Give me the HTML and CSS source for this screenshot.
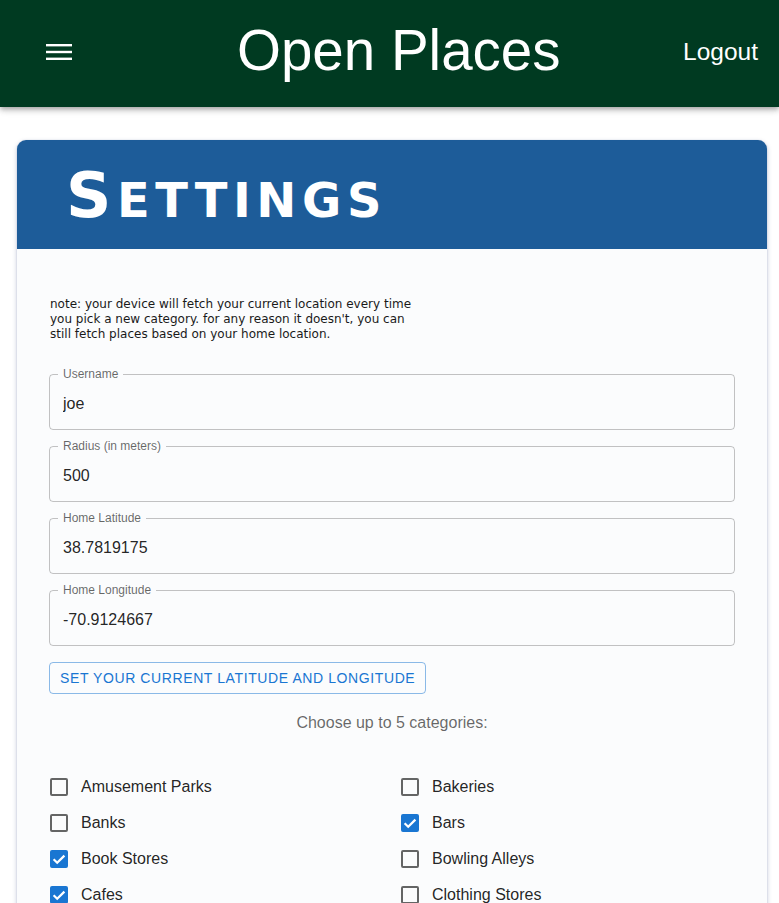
FILE: index.html
```html
<!DOCTYPE html>
<html lang="en">
<head>
<meta charset="utf-8">
<title>Open Places</title>
<link rel="stylesheet" href="styles.css">
</head>
<body>
<header class="appbar">
  <button class="menu-btn" aria-label="menu">
    <svg class="menu-icon" viewBox="0 0 26 16" width="26" height="16"><rect x="0" y="0" width="26" height="2.4"/><rect x="0" y="6.8" width="26" height="2.4"/><rect x="0" y="13.6" width="26" height="2.4"/></svg>
  </button>
  <h1 class="title">Open Places</h1>
  <button class="logout">Logout</button>
</header>

<main class="card">
  <div class="card-head"><h2 class="card-title">S<span class="caps">ettings</span></h2></div>
  <div class="card-body">
    <p class="note">note: your device will fetch your current location every time<br>you pick a new category. for any reason it doesn't, you can<br>still fetch places based on your home location.</p>

    <form class="fields">
      <fieldset class="field"><legend>Username</legend><input class="field-input" value="joe"></fieldset>
      <fieldset class="field"><legend>Radius (in meters)</legend><input class="field-input" value="500"></fieldset>
      <fieldset class="field"><legend>Home Latitude</legend><input class="field-input" value="38.7819175"></fieldset>
      <fieldset class="field"><legend>Home Longitude</legend><input class="field-input" value="-70.9124667"></fieldset>
    </form>

    <button class="outline-btn">Set your current latitude and longitude</button>

    <p class="choose">Choose up to 5 categories:</p>

    <div class="cats">
      <label class="cat"><span class="box"></span>Amusement Parks</label>
      <label class="cat"><span class="box"></span>Bakeries</label>
      <label class="cat"><span class="box"></span>Banks</label>
      <label class="cat"><span class="box checked"><svg viewBox="0 0 18 18" width="18" height="18"><path d="M3.6 9.2l3.6 3.6 7.2-7.2" /></svg></span>Bars</label>
      <label class="cat"><span class="box checked"><svg viewBox="0 0 18 18" width="18" height="18"><path d="M3.6 9.2l3.6 3.6 7.2-7.2" /></svg></span>Book Stores</label>
      <label class="cat"><span class="box"></span>Bowling Alleys</label>
      <label class="cat"><span class="box checked"><svg viewBox="0 0 18 18" width="18" height="18"><path d="M3.6 9.2l3.6 3.6 7.2-7.2" /></svg></span>Cafes</label>
      <label class="cat"><span class="box"></span>Clothing Stores</label>
      <label class="cat"><span class="box"></span>Convenience Stores</label>
      <label class="cat"><span class="box"></span>Gyms</label>
    </div>
  </div>
</main>
</body>
</html>
```

FILE: styles.css
```css
* { box-sizing: border-box; }
html, body { margin: 0; padding: 0; }
body {
  background: #ffffff;
  font-family: "Liberation Sans", Arial, sans-serif;
  color: rgba(0,0,0,0.87);
  overflow: hidden;
}

.appbar {
  height: 107px;
  background: #003a21;
  display: flex;
  align-items: center;
  padding: 0 21px 0 46px;
  box-shadow: 0 2px 4px -1px rgba(0,0,0,0.2), 0 4px 5px 0 rgba(0,0,0,0.14), 0 1px 10px 0 rgba(0,0,0,0.12);
  color: #fff;
}
.menu-btn {
  background: none;
  border: 0;
  padding: 0;
  display: flex;
  cursor: pointer;
  margin-top: -4px;
}
.menu-icon { fill: #fff; display: block; }
.title {
  flex: 1;
  margin: 0 0 0 100px;
  font-size: 56.5px;
  font-weight: 400;
  line-height: 1;
  text-align: left;
  padding-left: 65px;
  padding-bottom: 4px;
}
.logout {
  background: none;
  border: 0;
  color: #fff;
  font-family: "Liberation Sans", Arial, sans-serif;
  font-size: 24.5px;
  padding: 0;
  margin-bottom: 3px;
}

.card {
  margin: 33px 12px 0 17px;
  border-radius: 9px 9px 0 0;
  background: #fbfcfd;
  box-shadow: 0 2px 5px rgba(30,50,110,0.28), 0 0 1px rgba(30,50,110,0.3);
  overflow: hidden;
}
.card-head {
  background: #1d5c99;
  height: 109px;
  padding: 21px 0 0 49px;
}
.card-title {
  margin: 0;
  color: #fff;
  font-family: "DejaVu Sans", Verdana, sans-serif;
  font-weight: 700;
  font-size: 63px;
  line-height: 1.1;
  letter-spacing: 5.6px;
}
.caps {
  text-transform: uppercase;
  font-size: 0.76em;
}
.card-body {
  padding: 48px 32px 40px 32px;
}
.note {
  margin: 0 0 26px 1px;
  font-family: "DejaVu Sans", Verdana, sans-serif;
  font-size: 12px;
  line-height: 15px;
  color: #1a1a1a;
}

.fields {
  display: flex;
  flex-direction: column;
  gap: 10px;
  margin: 0;
}
.field {
  margin: 0;
  padding: 0 8px;
  border: 1px solid rgba(0,0,0,0.23);
  border-radius: 4px;
  min-width: 0;
}
.field legend {
  padding: 0 5px;
  font-size: 12px;
  line-height: 12px;
  color: rgba(0,0,0,0.6);
}
.field-input {
  display: block;
  width: 100%;
  height: 49px;
  border: 0;
  background: transparent;
  padding: 0 5px 2px;
  font-family: "Liberation Sans", Arial, sans-serif;
  font-size: 16px;
  color: rgba(0,0,0,0.87);
  outline: none;
}

.outline-btn {
  margin-top: 16px;
  height: 32px;
  padding: 0 10px;
  border: 1px solid rgba(25,118,210,0.5);
  border-radius: 4px;
  background: transparent;
  color: #1976d2;
  font-family: "Liberation Sans", Arial, sans-serif;
  font-size: 14px;
  letter-spacing: 0.6px;
  text-transform: uppercase;
  display: block;
}

.choose {
  margin: 17px 0 0;
  text-align: center;
  font-size: 16px;
  color: rgba(0,0,0,0.6);
  line-height: 24px;
}

.cats {
  margin-top: 34px;
  display: grid;
  grid-template-columns: 351px 1fr;
  row-gap: 0;
}
.cat {
  display: flex;
  align-items: center;
  height: 36px;
  gap: 13px;
  font-size: 16px;
  color: rgba(0,0,0,0.87);
  padding-left: 1px;
}
.box {
  width: 18px;
  height: 18px;
  border: 2px solid rgba(0,0,0,0.6);
  border-radius: 2px;
  flex: none;
  display: flex;
}
.box.checked {
  background: #1976d2;
  border-color: #1976d2;
}
.box svg {
  margin: -2px;
  fill: none;
  stroke: #fff;
  stroke-width: 2.2;
}
```
